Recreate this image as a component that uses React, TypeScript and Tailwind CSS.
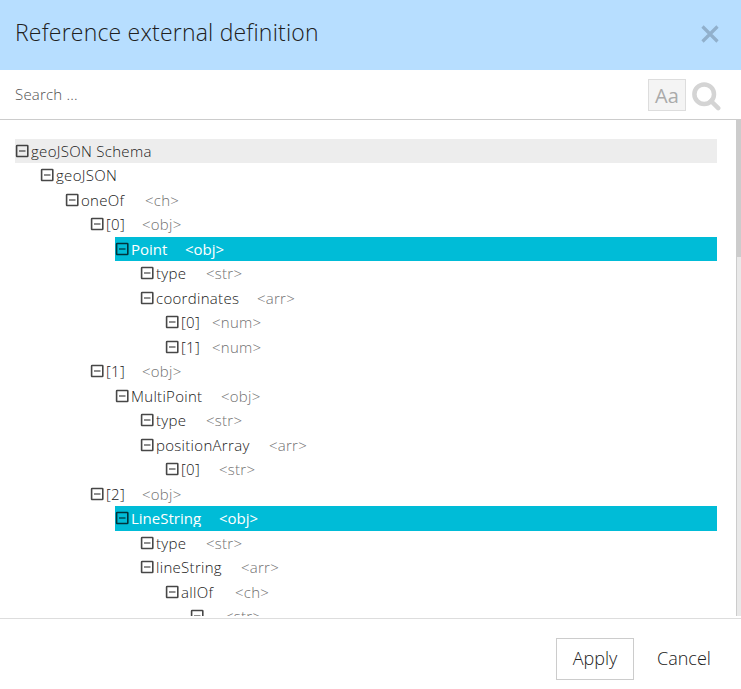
type Row = {
  level: number;
  label: string;
  tag?: string;
  labelWidth?: number;
  state?: "root" | "selected";
};

const rows: Row[] = [
  { level: 0, label: "geoJSON Schema", state: "root" },
  { level: 1, label: "geoJSON" },
  { level: 2, label: "oneOf", tag: "<ch>", labelWidth: 64 },
  { level: 3, label: "[0]", tag: "<obj>", labelWidth: 36 },
  { level: 4, label: "Point", tag: "<obj>", labelWidth: 54, state: "selected" },
  { level: 5, label: "type", tag: "<str>", labelWidth: 50 },
  { level: 5, label: "coordinates", tag: "<arr>", labelWidth: 101 },
  { level: 6, label: "[0]", tag: "<num>", labelWidth: 31 },
  { level: 6, label: "[1]", tag: "<num>", labelWidth: 31 },
  { level: 3, label: "[1]", tag: "<obj>", labelWidth: 36 },
  { level: 4, label: "MultiPoint", tag: "<obj>", labelWidth: 90 },
  { level: 5, label: "type", tag: "<str>", labelWidth: 50 },
  { level: 5, label: "positionArray", tag: "<arr>", labelWidth: 113 },
  { level: 6, label: "[0]", tag: "<str>", labelWidth: 38 },
  { level: 3, label: "[2]", tag: "<obj>", labelWidth: 36 },
  { level: 4, label: "LineString", tag: "<obj>", labelWidth: 88, state: "selected" },
  { level: 5, label: "type", tag: "<str>", labelWidth: 50 },
  { level: 5, label: "lineString", tag: "<arr>", labelWidth: 85 },
  { level: 6, label: "allOf", tag: "<ch>", labelWidth: 54 },
  { level: 7, label: "", tag: "<str>", labelWidth: 19 },
];

function CollapseIcon() {
  return (
    <svg className="mt-[5px] h-[14px] w-4 shrink-0" viewBox="0 0 16 14" fill="none">
      <rect x="1.6" y="1.5" width="11.2" height="11" rx="0.6" stroke="#000" strokeOpacity="0.72" strokeWidth="1.6" />
      <path d="M4 7h6.5" stroke="#000" strokeOpacity="0.55" strokeWidth="1.6" />
    </svg>
  );
}

function TreeRow({ row }: { row: Row }) {
  const selected = row.state === "selected";
  const background = selected ? "bg-[#00bcd7]" : row.state === "root" ? "bg-[#ededed]" : "";
  return (
    <div style={{ marginLeft: row.level * 25 }} className={`flex h-[24.5px] shrink-0 items-start ${background}`}>
      <CollapseIcon />
      <span
        style={{ width: row.labelWidth }}
        className={`mt-[2px] h-[19px] shrink-0 overflow-hidden whitespace-nowrap leading-[21px] ${selected ? "font-normal text-white" : "tracking-[0.3px] text-[#202020]"}`}
      >
        {row.label}
      </span>
      {row.tag && (
        <span className={`mt-[2px] leading-[21px] ${selected ? "font-normal text-white" : "tracking-[0.25px] text-[#707070]"}`}>{row.tag}</span>
      )}
    </div>
  );
}

export default function App() {
  return (
    <div className="flex h-[689px] w-[741px] flex-col overflow-hidden bg-white font-['Open_Sans','Noto_Sans',sans-serif] text-[15px] font-light text-[#202020]">
      <header className="flex h-[70px] shrink-0 items-start justify-between bg-[#b7deff] pl-[15px] pr-[22px]">
        <h1 className="mt-4 text-[23px] leading-8 tracking-[0.2px]">Reference external definition</h1>
        <button aria-label="Close" className="mt-[25px]">
          <svg className="h-[18px] w-[18px]" viewBox="0 0 18 18" fill="none" stroke="#91b0cc" strokeWidth="3.2">
            <path d="M1.5 1.5l15 15M16.5 1.5l-15 15" />
          </svg>
        </button>
      </header>
      <div className="flex h-[50px] shrink-0 items-start border-b border-[#ccc] pl-[15px] pr-5">
        <span className="mt-[14px] flex-1 leading-[21px] tracking-[0.2px] text-[#505050]">Search ...</span>
        <button className="mt-[9px] h-8 w-[38px] border border-[#ddd] bg-[#f4f4f4] text-[20px] leading-[31px] font-normal text-[#aaa]">Aa</button>
        <svg className="mt-3 ml-[6px] h-[29px] w-[29px]" viewBox="0 0 29 29" fill="none" stroke="#d4d4d4" strokeWidth="4.5">
          <circle cx="12.2" cy="12.2" r="9.8" />
          <path d="M19 19l7.2 7.2" strokeLinecap="round" />
        </svg>
      </div>
      <main className="flex h-[496px] shrink-0">
        <div className="flex w-[736px] flex-col overflow-hidden pt-[18.8px] pr-[19px] pl-[15px]">
          {rows.map((row, index) => (
            <TreeRow key={index} row={row} />
          ))}
        </div>
        <div className="w-[5px] border-l border-[#ccc] bg-[#e9e9e9]">
          <div className="h-[137px] bg-[#ccc]" />
        </div>
      </main>
      <footer className="mt-[2px] flex flex-1 items-start border-t border-[#ddd] pt-[19px] pl-[556px] text-[18px]">
        <button className="h-[42px] w-[78px] border border-[#ccc] pb-[2px] leading-[38px]">Apply</button>
        <button className="ml-[23px] h-[42px] pb-[2px] leading-10">Cancel</button>
      </footer>
    </div>
  );
}
